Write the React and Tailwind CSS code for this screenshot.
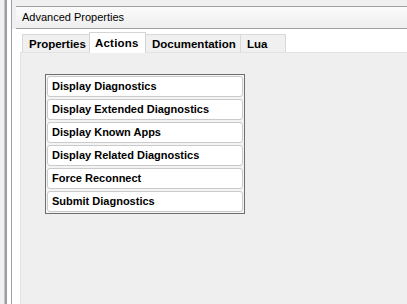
const actions = [
  'Display Diagnostics',
  'Display Extended Diagnostics',
  'Display Known Apps',
  'Display Related Diagnostics',
  'Force Reconnect',
  'Submit Diagnostics',
];

const tabs = [
  { label: 'Properties', w: 'w-[68px]' },
  { label: 'Actions', w: 'w-[57px]', active: true },
  { label: 'Documentation', w: 'w-[96px]' },
  { label: 'Lua', w: 'w-[46px]' },
];

export default function App() {
  return (
    <div className="w-[407px] h-[304px] flex overflow-hidden bg-[#f0f0f0] text-black font-['Liberation_Sans',Arial,sans-serif]">
      {/* left splitter edge */}
      <div className="w-[4px] bg-[#f0f0f0]" />
      <div className="w-[1px] bg-[#c4c4c8]" />
      <div className="w-[2px] bg-[#9c9ca2]" />
      <div className="w-[4px] bg-white" />
      <div className="w-[1px] bg-[#a0a0a0]" />

      <div className="flex-1 flex flex-col">
        <div className="h-[6px] bg-[#f0f0f0]" />
        <div className="ml-[4px] h-[23px] border-y border-[#a0a0a0] bg-gradient-to-b from-[#fbfbfb] to-[#eeeeee] pl-[6px] flex items-center text-[11px]">
          Advanced Properties
        </div>

        <div className="flex-1 flex bg-white">
          <div className="w-[8px]" />
          <div className="flex-1 flex flex-col">
            <div className="h-[23px] flex items-end pl-[2px]">
              {tabs.map((t) =>
                t.active ? (
                  <div
                    key={t.label}
                    className={`${t.w} h-[21px] -mb-px -ml-px relative z-10 bg-white border border-b-0 border-[#d4d4d4] pl-[5px] pt-[3px] text-[11.5px] font-bold leading-[14px] tracking-[0.2px]`}
                  >
                    {t.label}
                  </div>
                ) : (
                  <div
                    key={t.label}
                    className={`${t.w} h-[18px] -ml-px first:ml-0 bg-[#f0f0f0] border border-b-0 border-[#d9d9d9] pl-[6px] pt-[2px] text-[11.5px] font-bold leading-[14px]`}
                  >
                    {t.label}
                  </div>
                )
              )}
            </div>

            <div className="flex-1 bg-[#efefef] border-l border-t border-[#e3e3e3] pl-[24px] pt-[21px]">
              <div className="w-[200px] border border-[#6e6e6e] bg-[#f4f4f4] p-[1px] flex flex-col gap-[2px]">
                {actions.map((a) => (
                  <div
                    key={a}
                    className="h-[21px] rounded-[3px] border border-[#cacaca] bg-white pl-[4px] flex items-center text-[11px] font-bold"
                  >
                    {a}
                  </div>
                ))}
              </div>
            </div>
          </div>
        </div>
      </div>
    </div>
  );
}
